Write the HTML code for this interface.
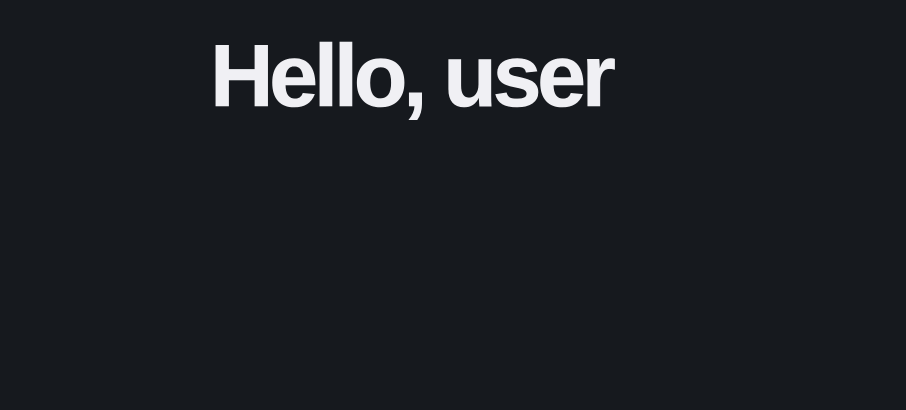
<!DOCTYPE html>
<html><head><style>
html,body{margin:0;padding:0;width:906px;height:410px;background:#16191e;overflow:hidden}
h1{position:absolute;left:210px;top:26px;margin:0;font-family:"Liberation Sans",sans-serif;font-weight:700;font-size:88px;line-height:100px;letter-spacing:-4.4px;color:#f0f0f4;-webkit-text-stroke:0.6px #f0f0f4;white-space:nowrap}
</style></head><body><h1>Hello, user</h1></body></html>
